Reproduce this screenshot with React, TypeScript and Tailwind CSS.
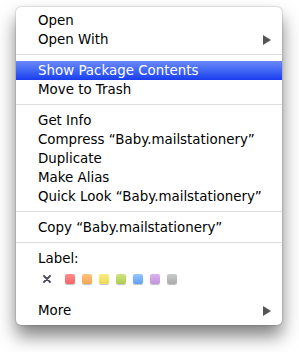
import React from 'react';

const font = { fontFamily: '"DejaVu Sans", "Liberation Sans", sans-serif' };

function Arrow({ white }: { white?: boolean }) {
  return (
    <svg width="8" height="10" viewBox="0 0 8 10" className="ml-auto">
      <path d="M0 0 L8 5 L0 10 Z" fill={white ? '#fff' : '#555'} />
    </svg>
  );
}

function Item({ label, active, sub }: { label: string; active?: boolean; sub?: boolean }) {
  return (
    <div
      className={
        active
          ? 'flex h-[19px] items-center pl-[22px] pr-[11px] text-white bg-gradient-to-b from-[#6b87f8] to-[#1a3bef]'
          : 'flex h-[19px] items-center pl-[22px] pr-[11px] text-black'
      }
    >
      <span className="whitespace-nowrap">{label}</span>
      {sub && <Arrow white={active} />}
    </div>
  );
}

function Sep() {
  return (
    <div className="h-[12px] pt-[5px]">
      <div className="h-px bg-[#dedede]" />
    </div>
  );
}

const swatches = [
  'from-[#ff8d8d] to-[#f26464]',
  'from-[#ffc47e] to-[#f3a54e]',
  'from-[#fbee80] to-[#ecda50]',
  'from-[#d0e480] to-[#aacd4c]',
  'from-[#96c6ff] to-[#5f9ff7]',
  'from-[#ddb4ee] to-[#c092dc]',
  'from-[#cacaca] to-[#ababab]',
];

export default function App() {
  return (
    <div className="h-[352px] w-[299px] bg-white pl-[16px] pt-[7px]" style={font}>
      <div className="w-[266px] rounded-[5px] bg-white pt-[4px] pb-[5px] text-[13.4px] leading-none shadow-[0_11px_18px_rgba(0,0,0,0.5),0_0_2px_rgba(0,0,0,0.35)]">
        <Item label="Open" />
        <Item label="Open With" sub />
        <Sep />
        <Item label="Show Package Contents" active />
        <Item label="Move to Trash" />
        <Sep />
        <Item label="Get Info" />
        <Item label="Compress “Baby.mailstationery”" />
        <Item label="Duplicate" />
        <Item label="Make Alias" />
        <Item label="Quick Look “Baby.mailstationery”" />
        <Sep />
        <Item label="Copy “Baby.mailstationery”" />
        <Sep />
        <Item label="Label:" />
        <div className="flex h-[33px] items-start pl-[27px] pt-[6px]">
          <svg width="8" height="8" viewBox="0 0 8 8" className="mt-[1px] mr-[14px]">
            <path d="M1 1 L7 7 M7 1 L1 7" stroke="#4a4a5a" strokeWidth="1.8" strokeLinecap="round" />
          </svg>
          <div className="flex gap-[7px]">
            {swatches.map((c, i) => (
              <div
                key={i}
                className={`h-[10px] w-[10px] rounded-[2px] bg-gradient-to-b ${c} shadow-[0_1px_1px_rgba(0,0,0,0.25)]`}
              />
            ))}
          </div>
        </div>
        <Item label="More" sub />
      </div>
    </div>
  );
}
